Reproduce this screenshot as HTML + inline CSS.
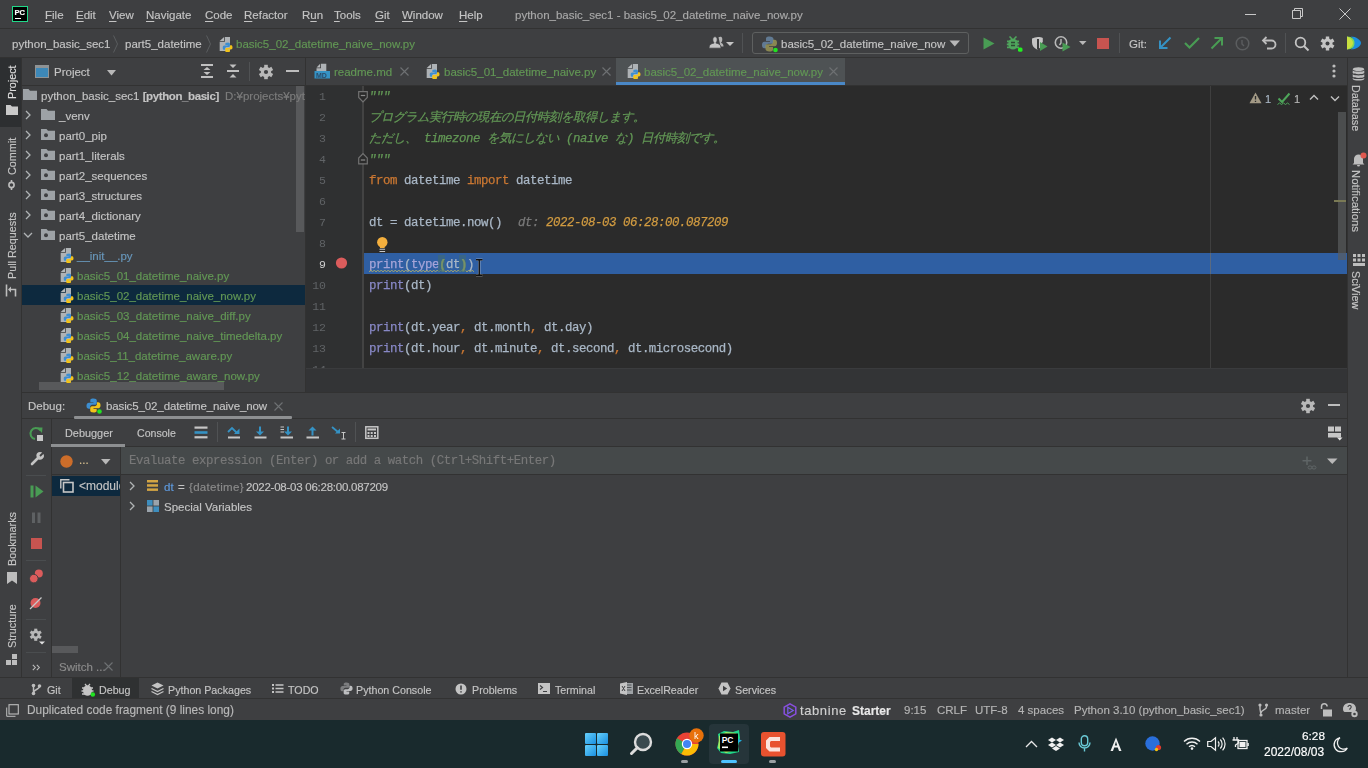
<!DOCTYPE html>
<html><head><meta charset="utf-8">
<style>
*{margin:0;padding:0;box-sizing:border-box}
html,body{width:1368px;height:768px;overflow:hidden;background:#3e3f41;font-family:"Liberation Sans",sans-serif;font-size:11.5px;color:#c4c4c4}
.a{position:absolute}
.t{position:absolute;white-space:nowrap;line-height:14px;-webkit-text-stroke:0.15px currentColor}
.m{font-family:"Liberation Mono",monospace}
.hl{position:absolute;background:#2b2b2b}
.g{color:#629755}
.u{text-decoration:underline;text-underline-offset:2px}
svg{position:absolute;overflow:visible}
#code .t{font-family:"Liberation Mono",monospace;font-size:12.4px;letter-spacing:-0.44px;line-height:21px;height:21px;color:#a9b7c6;-webkit-text-stroke:0.25px currentColor;margin-top:0.5px}
#code .cm{color:#629755}
.kw{color:#cc7832}
.j{display:inline-block;width:12px;font-style:inherit;vertical-align:top}
.bi{color:#8888c6}
.cm{color:#629755;font-style:italic}
.ln{position:absolute;font-family:"Liberation Mono",monospace;font-size:11.5px;color:#606366;line-height:21px;text-align:right;width:30px;left:296px}
</style></head><body>
<svg width="0" height="0" style="position:absolute">
<defs>
<symbol id="fold" viewBox="0 0 14 11"><path d="M0 0H5.5L7 1.8H14V11H0z" fill="#9da2a6"/></symbol>
<symbol id="foldp" viewBox="0 0 14 11"><path d="M0 0H5.5L7 1.8H14V11H0z" fill="#9da2a6"/><circle cx="5" cy="6.3" r="2" fill="#3e3f41"/></symbol>
<symbol id="pyl" viewBox="0 0 16 16"><path d="M7.9 0.5C4.5 0.5 4.6 2 4.6 2.6V4.4H8V5H3.1C1.7 5 0.5 6 0.5 8.3S1.6 11.5 3 11.5H4.3V9.6C4.3 8.3 5.4 7.2 6.6 7.2H9.6C10.7 7.2 11.5 6.3 11.5 5.2V2.6C11.5 1.4 10.5 0.5 7.9 0.5z" fill="#3d8ed0"/><path d="M8.1 15.5C11.5 15.5 11.4 14 11.4 13.4V11.6H8V11H12.9C14.3 11 15.5 10 15.5 7.7S14.4 4.5 13 4.5H11.7V6.4C11.7 7.7 10.6 8.8 9.4 8.8H6.4C5.3 8.8 4.5 9.7 4.5 10.8V13.4C4.5 14.6 5.5 15.5 8.1 15.5z" fill="#f2c318"/></symbol>
<symbol id="pyf" viewBox="0 0 16 16"><path d="M1.7 4.9L6.1 0.9V4.9z" fill="#b4b7b9"/><path d="M6.9 0.9H12V14.9H1.7V5.7H6.9z" fill="#aeb2b5"/><use href="#pyl" x="4.3" y="6.2" width="10.6" height="10.6"/></symbol>
<symbol id="chr" viewBox="0 0 6 10"><path d="M1 1L5 5L1 9" fill="none" stroke="#b0b3b5" stroke-width="1.3"/></symbol>
<symbol id="chd" viewBox="0 0 10 6"><path d="M1 1L5 5L9 1" fill="none" stroke="#b0b3b5" stroke-width="1.3"/></symbol>
<symbol id="gear" viewBox="0 0 16 16"><g transform="translate(8 8)" fill="#b8b8b8"><circle r="5.2"/><rect x="-1.8" y="-7.2" width="3.6" height="14.4"/><rect x="-1.8" y="-7.2" width="3.6" height="14.4" transform="rotate(60)"/><rect x="-1.8" y="-7.2" width="3.6" height="14.4" transform="rotate(120)"/></g><circle cx="8" cy="8" r="2.1" fill="#3e3f41"/></symbol>
</defs></svg>
<!-- ===== TITLE BAR ===== -->
<div class="a" style="left:0;top:0;width:1368px;height:28px;background:#3e3f41"></div>
<div class="a" style="left:0;top:28px;width:1368px;height:1px;background:#323232"></div>
<!-- ===== NAV BAR ===== -->
<div class="a" style="left:0;top:57px;width:1368px;height:1px;background:#323232"></div>
<!-- ===== LEFT STRIPE ===== -->
<div class="a" style="left:0;top:58px;width:22px;height:619px;background:#3e3f41;border-right:1px solid #323232"></div>
<div class="a" style="left:0;top:58px;width:21px;height:69px;background:#2d2f31"></div>
<!-- ===== PROJECT PANEL ===== -->
<div class="a" style="left:22px;top:58px;width:283px;height:27px;background:#3e3f41"></div>
<div class="a" style="left:22px;top:85px;width:283px;height:1px;background:#323232"></div>
<div class="a" style="left:22px;top:86px;width:283px;height:306px;background:#3e3f41"></div>
<div class="a" style="left:22px;top:285px;width:283px;height:20px;background:#0d293e"></div>
<div class="a" style="left:296px;top:86px;width:8px;height:146px;background:#58595b"></div>
<div class="a" style="left:39px;top:382px;width:185px;height:8px;background:#58595b"></div>
<div class="a" style="left:305px;top:58px;width:1px;height:334px;background:#323232"></div>
<!-- ===== EDITOR TABS ===== -->
<div class="a" style="left:306px;top:58px;width:1041px;height:27px;background:#3e3f41"></div>
<div class="a" style="left:616px;top:58px;width:229px;height:27px;background:#4e5254"></div>
<div class="a" style="left:616px;top:82px;width:229px;height:3px;background:#4a88c7"></div>
<div class="a" style="left:306px;top:85px;width:1041px;height:1px;background:#323232"></div>
<!-- ===== EDITOR ===== -->
<div class="a" style="left:306px;top:86px;width:1041px;height:282px;background:#2b2b2b"></div>
<div class="a" style="left:306px;top:86px;width:57px;height:282px;background:#2f3031"></div>
<div class="a" style="left:362px;top:86px;width:2px;height:282px;background:#434343"></div>
<div class="a" style="left:1210px;top:86px;width:1px;height:282px;background:#3f3f3f"></div>
<div class="a" style="left:364px;top:253px;width:983px;height:21px;background:#2f5fa3"></div>
<div class="a" style="left:1210px;top:253px;width:1px;height:21px;background:#5a6a80"></div>
<div class="a" style="left:1338px;top:112px;width:8px;height:148px;background:rgba(90,92,94,0.7)"></div>
<div class="a" style="left:1334px;top:200px;width:12px;height:2px;background:#7a7a55"></div>
<div class="a" style="left:306px;top:368px;width:1041px;height:24px;background:#333436"></div>
<div class="a" style="left:306px;top:368px;width:1041px;height:1px;background:#3a3b3d"></div>
<div class="a" style="left:296px;top:359px;width:30px;height:9px;overflow:hidden"><div class="t m" style="left:0;top:0;width:30px;text-align:right;font-size:11.5px;color:#606366;line-height:21px">14</div></div>
<!-- ===== RIGHT STRIPE ===== -->
<div class="a" style="left:1347px;top:58px;width:21px;height:619px;background:#3e3f41;border-left:1px solid #323232"></div>
<!-- ===== DEBUG PANEL ===== -->
<div class="a" style="left:22px;top:392px;width:1325px;height:1px;background:#323232"></div>
<div class="a" style="left:22px;top:418px;width:1325px;height:1px;background:#323232"></div>
<div class="a" style="left:74px;top:416px;width:218px;height:2.5px;background:#8d8f91;border-radius:1px"></div>
<div class="a" style="left:51px;top:419px;width:1px;height:258px;background:#323232"></div>
<div class="a" style="left:52px;top:446px;width:1295px;height:1px;background:#323232"></div>
<div class="a" style="left:51px;top:444px;width:74px;height:3px;background:#8d8f91"></div>
<div class="a" style="left:120px;top:447px;width:1227px;height:28px;background:#45494a"></div>
<div class="a" style="left:52px;top:474px;width:1295px;height:1px;background:#323232"></div>
<div class="a" style="left:120px;top:447px;width:1px;height:230px;background:#323232"></div>
<div class="a" style="left:52px;top:476px;width:68px;height:20px;background:#0d293e"></div>
<div class="a" style="left:52px;top:646px;width:26px;height:7px;background:#58595b"></div>
<!-- ===== BOTTOM TOOL BAR ===== -->
<div class="a" style="left:0;top:677px;width:1368px;height:1px;background:#323232"></div>
<div class="a" style="left:72px;top:678px;width:67px;height:21px;background:#2f3132"></div>
<div class="a" style="left:0;top:698px;width:1368px;height:1px;background:#323232"></div>
<!-- ===== TASKBAR ===== -->
<div class="a" style="left:0;top:720px;width:1368px;height:48px;background:#192a2d"></div>
<div class="a" style="left:709px;top:724px;width:40px;height:40px;background:#26353a;border-radius:4px"></div>

<!-- TITLE TEXT -->
<div class="a" style="left:12px;top:6px;width:16px;height:16px;background:#000;border:1.5px solid #21d789"></div>
<div class="t" style="left:14.5px;top:8.5px;font-size:7.6px;font-weight:bold;color:#fff;line-height:8px">PC</div>
<div class="a" style="left:15px;top:17.5px;width:5.5px;height:1.5px;background:#fff"></div>
<div class="t" style="left:45px;top:8px"><span class="u">F</span>ile</div>
<div class="t" style="left:76px;top:8px"><span class="u">E</span>dit</div>
<div class="t" style="left:109px;top:8px"><span class="u">V</span>iew</div>
<div class="t" style="left:146px;top:8px"><span class="u">N</span>avigate</div>
<div class="t" style="left:205px;top:8px"><span class="u">C</span>ode</div>
<div class="t" style="left:244px;top:8px"><span class="u">R</span>efactor</div>
<div class="t" style="left:302px;top:8px">R<span class="u">u</span>n</div>
<div class="t" style="left:334px;top:8px"><span class="u">T</span>ools</div>
<div class="t" style="left:375px;top:8px"><span class="u">G</span>it</div>
<div class="t" style="left:402px;top:8px"><span class="u">W</span>indow</div>
<div class="t" style="left:459px;top:8px"><span class="u">H</span>elp</div>
<div class="t" style="left:515px;top:8px;color:#a9a9a9">python_basic_sec1 - basic5_02_datetime_naive_now.py</div>
<!-- NAV TEXT -->
<div class="t" style="left:12px;top:37px">python_basic_sec1</div>
<div class="t" style="left:125px;top:37px">part5_datetime</div>
<div class="t g" style="left:236px;top:37px">basic5_02_datetime_naive_now.py</div>
<div class="a" style="left:752px;top:32px;width:217px;height:22px;border:1px solid #5e6060;border-radius:3px"></div>
<div class="t" style="left:781px;top:37px">basic5_02_datetime_naive_now</div>
<div class="t" style="left:1129px;top:37px">Git:</div>
<!-- PROJECT HEADER -->
<div class="t" style="left:54px;top:65px">Project</div>
<!-- TABS -->
<div class="t g" style="left:334px;top:65px">readme.md</div>
<div class="t g" style="left:444px;top:65px">basic5_01_datetime_naive.py</div>
<div class="t g" style="left:644px;top:65px">basic5_02_datetime_naive_now.py</div>
<!-- TREE -->
<div class="a" style="left:22px;top:86px;width:283px;height:306px;overflow:hidden">
<div class="t" style="left:19px;top:3px">python_basic_sec1 <b style="letter-spacing:-0.4px">[python_basic]</b> <span style="color:#7c7c7c;margin-left:3px">D:¥projects¥python_basic</span></div>
<div class="t" style="left:37px;top:23px">_venv</div>
<div class="t" style="left:37px;top:43px">part0_pip</div>
<div class="t" style="left:37px;top:63px">part1_literals</div>
<div class="t" style="left:37px;top:83px">part2_sequences</div>
<div class="t" style="left:37px;top:103px">part3_structures</div>
<div class="t" style="left:37px;top:123px">part4_dictionary</div>
<div class="t" style="left:37px;top:143px">part5_datetime</div>
<div class="t" style="left:55px;top:163px;color:#6897bb">__init__.py</div>
<div class="t g" style="left:55px;top:183px">basic5_01_datetime_naive.py</div>
<div class="t g" style="left:55px;top:203px">basic5_02_datetime_naive_now.py</div>
<div class="t g" style="left:55px;top:223px">basic5_03_datetime_naive_diff.py</div>
<div class="t g" style="left:55px;top:243px">basic5_04_datetime_naive_timedelta.py</div>
<div class="t g" style="left:55px;top:263px">basic5_11_datetime_aware.py</div>
<div class="t g" style="left:55px;top:283px">basic5_12_datetime_aware_now.py</div>
</div>

<!-- CODE -->
<div id="code">
<div class="ln" style="top:86px">1</div>
<div class="ln" style="top:107px">2</div>
<div class="ln" style="top:128px">3</div>
<div class="ln" style="top:149px">4</div>
<div class="ln" style="top:170px">5</div>
<div class="ln" style="top:191px">6</div>
<div class="ln" style="top:212px">7</div>
<div class="ln" style="top:233px">8</div>
<div class="ln" style="top:254px;color:#d0d0d0">9</div>
<div class="ln" style="top:275px">10</div>
<div class="ln" style="top:296px">11</div>
<div class="ln" style="top:317px">12</div>
<div class="ln" style="top:338px">13</div>
<div class="t cm" style="left:369px;top:86px">"""</div>
<div class="t cm" style="left:369px;top:107px"><i class="j">プ</i><i class="j">ロ</i><i class="j">グ</i><i class="j">ラ</i><i class="j">ム</i><i class="j">実</i><i class="j">行</i><i class="j">時</i><i class="j">の</i><i class="j">現</i><i class="j">在</i><i class="j">の</i><i class="j">日</i><i class="j">付</i><i class="j">時</i><i class="j">刻</i><i class="j">を</i><i class="j">取</i><i class="j">得</i><i class="j">し</i><i class="j">ま</i><i class="j">す</i><i class="j">。</i></div>
<div class="t cm" style="left:369px;top:128px"><i class="j">た</i><i class="j">だ</i><i class="j">し</i><i class="j">、</i> timezone <i class="j">を</i><i class="j">気</i><i class="j">に</i><i class="j">し</i><i class="j">な</i><i class="j">い</i> (naive <i class="j">な</i>) <i class="j">日</i><i class="j">付</i><i class="j">時</i><i class="j">刻</i><i class="j">で</i><i class="j">す</i><i class="j">。</i></div>
<div class="t cm" style="left:369px;top:149px">"""</div>
<div class="t" style="left:369px;top:170px"><span class="kw">from</span> datetime <span class="kw">import</span> datetime</div>
<div class="t" style="left:369px;top:212px">dt = datetime.now()</div>
<div class="t" style="left:518px;top:212px;font-style:italic"><span style="color:#787878">dt:</span> <span style="color:#d19b41">2022-08-03 06:28:00.087209</span></div>
<div class="t" style="left:369px;top:254px;color:#a9b7c6"><span style="color:#a5a4d8">print</span>(<span style="color:#a5a4d8">type</span><span style="color:#fff23a;font-weight:bold">(</span>dt<span style="color:#fff23a;font-weight:bold">)</span>)</div>
<div class="t" style="left:369px;top:275px"><span class="bi">print</span>(dt)</div>
<div class="t" style="left:369px;top:317px"><span class="bi">print</span>(dt.year<span class="kw">,</span> dt.month<span class="kw">,</span> dt.day)</div>
<div class="t" style="left:369px;top:338px"><span class="bi">print</span>(dt.hour<span class="kw">,</span> dt.minute<span class="kw">,</span> dt.second<span class="kw">,</span> dt.microsecond)</div>
</div>
<!-- DEBUG TEXT -->
<div class="t" style="left:28px;top:399px">Debug:</div>
<div class="t" style="left:106px;top:399px;letter-spacing:-0.12px">basic5_02_datetime_naive_now</div>
<div class="t" style="left:65px;top:426px;font-size:10.9px">Debugger</div>
<div class="t" style="left:137px;top:426px;font-size:10.6px">Console</div>
<div class="t m" style="left:129px;top:454px;font-size:12.4px;letter-spacing:-0.44px;color:#787878">Evaluate expression (Enter) or add a watch (Ctrl+Shift+Enter)</div>
<div class="a" style="left:52px;top:476px;width:68px;height:20px;overflow:hidden"><div class="t" style="left:27px;top:3px;font-size:12px">&lt;module&gt;</div></div>
<div class="t" style="left:164px;top:480px;color:#5f9be0">dt</div><div class="t" style="left:178px;top:480px">=</div><div class="t" style="left:189px;top:480px;color:#8c8c8c;font-size:11.5px;letter-spacing:0.3px">{datetime}</div><div class="t" style="left:246px;top:480px;letter-spacing:-0.25px">2022-08-03 06:28:00.087209</div>
<div class="t" style="left:164px;top:500px">Special Variables</div>
<div class="t" style="left:59px;top:660px;color:#8c8c8c">Switch ...</div>
<!-- BOTTOM BAR TEXT -->
<div class="t" style="left:47px;top:683px;font-size:10.7px">Git</div>
<div class="t" style="left:99px;top:683px;font-size:10.7px">Debug</div>
<div class="t" style="left:168px;top:683px;font-size:10.7px">Python Packages</div>
<div class="t" style="left:288px;top:683px;font-size:10.7px">TODO</div>
<div class="t" style="left:356px;top:683px;font-size:10.7px">Python Console</div>
<div class="t" style="left:472px;top:683px;font-size:10.7px">Problems</div>
<div class="t" style="left:555px;top:683px;font-size:10.7px">Terminal</div>
<div class="t" style="left:637px;top:683px;font-size:10.7px">ExcelReader</div>
<div class="t" style="left:735px;top:683px;font-size:10.7px">Services</div>
<!-- STATUS BAR TEXT -->
<div class="t" style="left:27px;top:703px;font-size:11.9px;color:#b8b8b8">Duplicated code fragment (9 lines long)</div>
<div class="t" style="left:800px;top:703.5px;font-size:13px;color:#d0d0d0;letter-spacing:0.6px">tabnine</div><div class="t" style="left:852px;top:703.5px;font-size:12px;font-weight:bold;color:#e8e8e8">Starter</div>
<div class="t" style="left:904px;top:703px;color:#b4b4b4">9:15</div>
<div class="t" style="left:937px;top:703px;color:#b4b4b4">CRLF</div>
<div class="t" style="left:975px;top:703px;color:#b4b4b4">UTF-8</div>
<div class="t" style="left:1018px;top:703px;color:#b4b4b4">4 spaces</div>
<div class="t" style="left:1074px;top:703px;color:#b4b4b4">Python 3.10 (python_basic_sec1)</div>
<div class="t" style="left:1275px;top:703px;color:#b4b4b4">master</div>
<!-- TASKBAR TEXT -->
<div class="t" style="left:1302px;top:729px;color:#fff;font-size:11.8px">6:28</div>
<div class="t" style="left:1264px;top:745px;color:#fff;font-size:12px">2022/08/03</div>

<!-- WINDOW CONTROLS -->
<svg style="left:1245px;top:9px" width="12" height="10"><path d="M0 5.5H11" stroke="#c8c8c8" stroke-width="1"/></svg>
<svg style="left:1292px;top:8px" width="12" height="12"><path d="M0.5 2.5h8v8h-8z M2.5 2.5V0.5h8v8h-2" fill="none" stroke="#c8c8c8" stroke-width="1"/></svg>
<svg style="left:1339px;top:8px" width="12" height="12"><path d="M0.5 0.5L11.5 11.5M11.5 0.5L0.5 11.5" stroke="#c8c8c8" stroke-width="1"/></svg>
<!-- NAV CHEVRONS -->
<svg style="left:113px;top:35px" width="6" height="18"><path d="M0.5 0.5L4.5 9L0.5 17.5" fill="none" stroke="#5a5d5f" stroke-width="1"/></svg>
<svg style="left:206px;top:35px" width="6" height="18"><path d="M0.5 0.5L4.5 9L0.5 17.5" fill="none" stroke="#5a5d5f" stroke-width="1"/></svg>
<!-- TOOLBAR -->
<svg style="left:709px;top:36px" width="26" height="14"><path d="M9.5 1.3C11 0.5 13.3 0.5 13.3 3.2C13.3 5 12.7 6.3 11.8 6.8C13.5 7.3 14.5 8.5 14.5 10.5H11.5z" fill="#b4b4b4"/><path d="M3.8 3.2C3.8 1.2 5.2 0.8 6 0.8S8.2 1.2 8.2 3.2C8.2 5.2 7.5 6.5 6.8 7C10 7.5 12 8.8 12 11.8V12.2H0V11.8C0 8.8 2 7.5 5.2 7C4.5 6.5 3.8 5.2 3.8 3.2z" fill="#c4c4c4" stroke="#3e3f41" stroke-width="0.8"/><path d="M17 6H25L21 10z" fill="#c4c4c4"/></svg>
<div class="a" style="left:742px;top:33px;width:1px;height:20px;background:#505254"></div>
<svg style="left:983px;top:37px" width="12" height="13"><path d="M0.5 0.5L11.5 6.5L0.5 12.5z" fill="#499c54"/></svg>
<svg style="left:1006px;top:35px" width="18" height="18"><g fill="#4fa55c"><path d="M3.5 1.5L6 4M10.5 1.5L8 4" stroke="#4fa55c" stroke-width="1.6"/><ellipse cx="7" cy="9" rx="4.8" ry="5.5"/><path d="M1 5.5h12v1.8H1zM0.8 8.5h12.4v1.8H0.8zM1 11.5h12v1.8H1z"/></g><path d="M5 7.5h4M5 10.5h4" stroke="#2e4a33" stroke-width="1.3"/><rect x="12" y="12.5" width="4.5" height="4.2" rx="1.5" fill="#22f022"/></svg>
<svg style="left:1031px;top:36px" width="18" height="16"><path d="M1 2.5C3 1.5 5 1 7 1C9 1 10.5 1.3 11.8 2V6L9.5 8.5V11.5C8.5 12.3 7.5 12.8 6 13.5C3 12 1 10 1 6.5z" fill="#c4c4c4"/><path d="M7 3V13" stroke="#2b2d2e" stroke-width="1.8"/><path d="M9 6L16.5 10.5L9 15z" fill="#499c54"/></svg>
<svg style="left:1054px;top:35px" width="34" height="17"><circle cx="7" cy="7.5" r="5.7" fill="none" stroke="#b8b8b8" stroke-width="1.6"/><path d="M7 4v4l-1.5 2" stroke="#b8b8b8" stroke-width="1.4" fill="none"/><path d="M8.5 7.5L16.5 12L8.5 16.5z" fill="#499c54"/><path d="M25 6h7.5l-3.75 4z" fill="#b8b8b8"/></svg>
<div class="a" style="left:1097px;top:38px;width:12px;height:11px;background:#c75450"></div>
<div class="a" style="left:1119px;top:33px;width:1px;height:20px;background:#505254"></div>
<svg style="left:1158px;top:36px" width="14" height="14"><path d="M12.5 1.5L3 11M2 4.5V12H9.5" fill="none" stroke="#3592c4" stroke-width="2"/></svg>
<svg style="left:1184px;top:37px" width="16" height="12"><path d="M1 6L5.5 10.5L15 1" fill="none" stroke="#499c54" stroke-width="2.2"/></svg>
<svg style="left:1210px;top:36px" width="14" height="14"><path d="M1.5 12.5L11 3M4.5 2H12V9.5" fill="none" stroke="#499c54" stroke-width="2"/></svg>
<svg style="left:1235px;top:36px" width="16" height="16"><circle cx="7.5" cy="7.5" r="6.3" fill="none" stroke="#5b5d5f" stroke-width="1.5"/><path d="M7 4v4l2 2" stroke="#5b5d5f" stroke-width="1.4" fill="none"/></svg>
<svg style="left:1262px;top:36px" width="16" height="15"><path d="M4.5 1L1 4.5L4.5 8" fill="none" stroke="#bdbdbd" stroke-width="1.8"/><path d="M1.5 4.5H9.5a4 4 0 0 1 0 8H5" fill="none" stroke="#bdbdbd" stroke-width="1.8"/></svg>
<div class="a" style="left:1285px;top:33px;width:1px;height:20px;background:#505254"></div>
<svg style="left:1294px;top:36px" width="16" height="16"><circle cx="6.5" cy="6.5" r="4.8" fill="none" stroke="#c4c4c4" stroke-width="1.8"/><path d="M10 10L14.5 14.5" stroke="#c4c4c4" stroke-width="2"/></svg>
<svg style="left:1320px;top:36px" width="16" height="16"><g transform="translate(7.5 7.5)" fill="#c4c4c4"><circle r="5"/><rect x="-1.7" y="-7" width="3.4" height="14"/><rect x="-1.7" y="-7" width="3.4" height="14" transform="rotate(60)"/><rect x="-1.7" y="-7" width="3.4" height="14" transform="rotate(120)"/></g><circle cx="7.5" cy="7.5" r="2" fill="#3e3f41"/></svg>
<svg style="left:1346px;top:35px" width="16" height="16"><path d="M1 1.5C6 1.5 10 5 10 8s-4 6.5-9 6.5z" fill="#7ed85a"/><path d="M5 1.5C10 1.5 15 5 15 8s-5 6.5-10 6.5C8 12 8.5 10 8.5 8S8 4 5 1.5z" fill="#1b8fe0"/><path d="M1 1.5C5 3 7 5.5 7 8s-2 5-6 6.5z" fill="#c8e040"/></svg>
<!-- run config python icon -->
<svg style="left:762px;top:36px" width="18" height="18"><path d="M7.5 0.5C4 0.5 4 2 4 3v2h4v0.8H2.2C0.8 5.8 0 7 0 9s0.8 3.2 2.2 3.2H4V10c0-1.2 1-2.2 2.2-2.2h3.6C11 7.8 11.5 7 11.5 6V3c0-1.5-1.5-2.5-4-2.5z" fill="#6a8aa8" opacity="0.8"/><path d="M7.5 15.5c3.5 0 3.5-1.5 3.5-2.5v-2H7v-0.8h5.8c1.4 0 2.2-1.2 2.2-3.2s-0.8-3.2-2.2-3.2H11V6c0 1.2-1 2.2-2.2 2.2H5.2C4 8.2 3.5 9 3.5 10v3c0 1.5 1.5 2.5 4 2.5z" fill="#9e9a55" opacity="0.8"/><circle cx="13.5" cy="14" r="2.3" fill="#22e222"/></svg>
<svg style="left:949px;top:40px" width="12" height="8"><path d="M0.5 0.5h10.5l-5.25 6z" fill="#b8b8b8"/></svg>

<!-- PROJECT HEADER ICONS -->
<div class="a" style="left:35px;top:65px;width:14px;height:13px;border:1.5px solid #8f9395;background:#3d88b8"></div>
<div class="a" style="left:35px;top:65px;width:14px;height:3px;background:#8f9395"></div>
<svg style="left:107px;top:70px" width="9" height="6"><path d="M0 0H9L4.5 5.5z" fill="#b8b8b8"/></svg>
<svg style="left:200px;top:63px" width="14" height="16"><path d="M1 1h12v2H1zM1 13h12v2H1z" fill="#c0c0c0"/><path d="M3.5 7L7 4L10.5 7zM3.5 9L7 12L10.5 9z" fill="#c0c0c0"/></svg>
<svg style="left:226px;top:63px" width="14" height="16"><path d="M1 7h12v2H1z" fill="#c0c0c0"/><path d="M3.5 1.5L7 5L10.5 1.5zM3.5 14.5L7 11L10.5 14.5z" fill="#c0c0c0"/></svg>
<div class="a" style="left:249px;top:62px;width:1px;height:19px;background:#505254"></div>
<svg style="left:258px;top:64px" width="16" height="16"><use href="#gear" width="16" height="16"/></svg>
<div class="a" style="left:286px;top:70px;width:13px;height:2px;background:#bdbdbd"></div>
<!-- LEFT STRIPE TEXT -->
<div class="t" style="left:5px;top:99px;transform:rotate(-90deg);transform-origin:left top;font-size:10.8px;color:#dcdcdc">Project</div>
<svg style="left:6px;top:105px" width="12" height="10"><path d="M0 0H4.5L6 1.5H12V10H0z" fill="#c9c9c9"/></svg>
<div class="t" style="left:5px;top:175px;transform:rotate(-90deg);transform-origin:left top;font-size:10.8px">Commit</div>
<svg style="left:5px;top:180px" width="13" height="10"><circle cx="6.5" cy="5" r="2.6" fill="none" stroke="#bdbdbd" stroke-width="1.6"/><path d="M6.5 0V2.3M6.5 7.7V10" stroke="#bdbdbd" stroke-width="1.6"/></svg>
<div class="t" style="left:5px;top:279px;transform:rotate(-90deg);transform-origin:left top;font-size:10.8px">Pull Requests</div>
<svg style="left:5px;top:284px" width="12" height="13"><path d="M1.5 0.5V12.5" stroke="#bdbdbd" stroke-width="1.6"/><path d="M10.5 12.5V5.5H5" fill="none" stroke="#bdbdbd" stroke-width="1.6"/><path d="M6 2.5L3 5.5L6 8.5z" fill="#bdbdbd"/></svg>
<div class="t" style="left:5px;top:566px;transform:rotate(-90deg);transform-origin:left top;font-size:10.8px">Bookmarks</div>
<svg style="left:7px;top:572px" width="10" height="12"><path d="M0 0H10V12L5 8.5L0 12z" fill="#bdbdbd"/></svg>
<div class="t" style="left:5px;top:648px;transform:rotate(-90deg);transform-origin:left top;font-size:10.8px">Structure</div>
<svg style="left:6px;top:654px" width="11" height="11"><path d="M6 0h5v5H6zM0 6h5v5H0zM6 6h5v5H6z" fill="#bdbdbd"/></svg>
<!-- RIGHT STRIPE TEXT -->
<svg style="left:1352px;top:67px" width="13" height="14"><g fill="#bdbdbd"><ellipse cx="6.5" cy="2.2" rx="5.8" ry="2"/><path d="M0.7 3.5c1 1.6 10.6 1.6 11.6 0v2.5c-1 1.6-10.6 1.6-11.6 0z"/><path d="M0.7 7.2c1 1.6 10.6 1.6 11.6 0v2.5c-1 1.6-10.6 1.6-11.6 0z"/><path d="M0.7 10.9c1 1.6 10.6 1.6 11.6 0v1c-1 2.2-10.6 2.2-11.6 0z"/></g></svg>
<div class="t" style="left:1363px;top:85px;transform:rotate(90deg);transform-origin:left top;font-size:10.8px">Database</div>
<svg style="left:1352px;top:152px" width="14" height="15"><path d="M2 11V7a4.5 4.5 0 0 1 9 0v4l1.5 1.5H0.5z" fill="#bdbdbd"/><path d="M5 13h3a1.5 1.5 0 0 1-3 0z" fill="#bdbdbd"/><circle cx="11.5" cy="3.5" r="3" fill="#e0584f"/></svg>
<div class="t" style="left:1363px;top:170px;transform:rotate(90deg);transform-origin:left top;font-size:11.4px">Notifications</div>
<svg style="left:1353px;top:254px" width="12" height="12"><g fill="#bdbdbd"><rect x="0" y="0" width="3" height="3"/><rect x="4.5" y="0" width="3" height="3"/><rect x="9" y="0" width="3" height="3"/><rect x="0" y="4.5" width="3" height="3"/><rect x="4.5" y="4.5" width="3" height="3"/><rect x="9" y="4.5" width="3" height="3"/><rect x="0" y="9" width="12" height="3"/></g></svg>
<div class="t" style="left:1363px;top:271px;transform:rotate(90deg);transform-origin:left top;font-size:10.8px">SciView</div>
<!-- TREE ICONS -->
<svg style="left:23px;top:89px" width="14" height="11"><use href="#fold" width="14" height="11"/></svg>
<svg style="left:25px;top:110px" width="6" height="10"><use href="#chr" width="6" height="10"/></svg>
<svg style="left:41px;top:109px" width="14" height="11"><use href="#fold" width="14" height="11"/></svg>
<svg style="left:25px;top:130px" width="6" height="10"><use href="#chr" width="6" height="10"/></svg>
<svg style="left:41px;top:129px" width="14" height="11"><use href="#foldp" width="14" height="11"/></svg>
<svg style="left:25px;top:150px" width="6" height="10"><use href="#chr" width="6" height="10"/></svg>
<svg style="left:41px;top:149px" width="14" height="11"><use href="#foldp" width="14" height="11"/></svg>
<svg style="left:25px;top:170px" width="6" height="10"><use href="#chr" width="6" height="10"/></svg>
<svg style="left:41px;top:169px" width="14" height="11"><use href="#foldp" width="14" height="11"/></svg>
<svg style="left:25px;top:190px" width="6" height="10"><use href="#chr" width="6" height="10"/></svg>
<svg style="left:41px;top:189px" width="14" height="11"><use href="#foldp" width="14" height="11"/></svg>
<svg style="left:25px;top:210px" width="6" height="10"><use href="#chr" width="6" height="10"/></svg>
<svg style="left:41px;top:209px" width="14" height="11"><use href="#foldp" width="14" height="11"/></svg>
<svg style="left:23px;top:232px" width="10" height="6"><use href="#chd" width="10" height="6"/></svg>
<svg style="left:41px;top:229px" width="14" height="11"><use href="#foldp" width="14" height="11"/></svg>
<div class="a" style="left:59px;top:247px;width:16px;height:140px;overflow:hidden">
<svg style="left:0;top:0" width="16" height="16"><use href="#pyf" width="16" height="16"/></svg>
<svg style="left:0;top:20px" width="16" height="16"><use href="#pyf" width="16" height="16"/></svg>
<svg style="left:0;top:40px" width="16" height="16"><use href="#pyf" width="16" height="16"/></svg>
<svg style="left:0;top:60px" width="16" height="16"><use href="#pyf" width="16" height="16"/></svg>
<svg style="left:0;top:80px" width="16" height="16"><use href="#pyf" width="16" height="16"/></svg>
<svg style="left:0;top:100px" width="16" height="16"><use href="#pyf" width="16" height="16"/></svg>
<svg style="left:0;top:120px" width="16" height="16"><use href="#pyf" width="16" height="16"/></svg>
<svg style="left:0;top:140px" width="16" height="16"><use href="#pyf" width="16" height="16"/></svg>
</div>
<!-- TAB ICONS -->
<svg style="left:314px;top:63px" width="18" height="17"><path d="M2.5 4.5L6.2 0.8V4.5z" fill="#b4b7b9"/><path d="M7 0.8H12.3V8H2.5V5.3H7z" fill="#aeb2b5"/><rect x="0.5" y="8" width="15.5" height="7.5" fill="#3592c4"/><text x="2" y="14.5" font-family="Liberation Sans" font-size="7" font-weight="bold" fill="#2b4c6a">MD</text></svg>
<svg style="left:400px;top:67px" width="9" height="9"><path d="M0.5 0.5L8.5 8.5M8.5 0.5L0.5 8.5" stroke="#6e7173" stroke-width="1.1"/></svg>
<svg style="left:425px;top:63px" width="16" height="16"><use href="#pyf" width="16" height="16"/></svg>
<svg style="left:602px;top:67px" width="9" height="9"><path d="M0.5 0.5L8.5 8.5M8.5 0.5L0.5 8.5" stroke="#6e7173" stroke-width="1.1"/></svg>
<svg style="left:626px;top:63px" width="16" height="16"><use href="#pyf" width="16" height="16"/></svg>
<svg style="left:829px;top:67px" width="9" height="9"><path d="M0.5 0.5L8.5 8.5M8.5 0.5L0.5 8.5" stroke="#6e7173" stroke-width="1.1"/></svg>
<svg style="left:1332px;top:64px" width="4" height="14"><circle cx="2" cy="2" r="1.6" fill="#bdbdbd"/><circle cx="2" cy="7" r="1.6" fill="#bdbdbd"/><circle cx="2" cy="12" r="1.6" fill="#bdbdbd"/></svg>
<!-- NAV ICON -->
<svg style="left:218px;top:36px" width="16" height="16"><use href="#pyf" width="16" height="16"/></svg>

<!-- EDITOR DECOR -->
<svg style="left:358px;top:91px" width="11" height="12"><path d="M0.7 0.7H9.3V6.5L5 10.8L0.7 6.5z" fill="#2b2b2b" stroke="#727272" stroke-width="1.2"/><path d="M2.8 4.5H7.2" stroke="#8a8a8a" stroke-width="1.2"/></svg>
<svg style="left:358px;top:153px" width="11" height="12"><path d="M0.7 10.8H9.3V5L5 0.7L0.7 5z" fill="#2b2b2b" stroke="#727272" stroke-width="1.2"/><path d="M2.8 7H7.2" stroke="#8a8a8a" stroke-width="1.2"/></svg>
<svg style="left:335px;top:257px" width="13" height="13"><circle cx="6.5" cy="6" r="5.6" fill="#db5c5c"/></svg>
<svg style="left:377px;top:237px" width="12" height="16"><circle cx="5.3" cy="5.3" r="5.2" fill="#f4af3d"/><path d="M3 10h4.6v1H3z" fill="#f4af3d"/><path d="M2.5 12.3h5.6M2.5 14.5h5.6" stroke="#c8c8c8" stroke-width="1.1"/></svg>
<svg style="left:369px;top:269px;overflow:hidden" width="105" height="4"><path d="M0 3 l1.75 -2 1.75 2 1.75 -2 1.75 2 1.75 -2 1.75 2 1.75 -2 1.75 2 1.75 -2 1.75 2 1.75 -2 1.75 2 1.75 -2 1.75 2 1.75 -2 1.75 2 1.75 -2 1.75 2 1.75 -2 1.75 2 1.75 -2 1.75 2 1.75 -2 1.75 2 1.75 -2 1.75 2 1.75 -2 1.75 2 1.75 -2 1.75 2 1.75 -2 1.75 2 1.75 -2 1.75 2 1.75 -2 1.75 2 1.75 -2 1.75 2 1.75 -2 1.75 2 1.75 -2 1.75 2 1.75 -2 1.75 2 1.75 -2 1.75 2 1.75 -2 1.75 2 1.75 -2 1.75 2 1.75 -2 1.75 2 1.75 -2 1.75 2 1.75 -2 1.75 2 1.75 -2 1.75 2 1.75 -2 1.75 2" fill="none" stroke="#a8a86a" stroke-width="0.9"/></svg>
<div class="a" style="left:438px;top:255px;width:7px;height:17px;background:#3d6a7a;opacity:0.7"></div>
<div class="a" style="left:459px;top:255px;width:7px;height:17px;background:#3d6a7a;opacity:0.7"></div>
<svg style="left:475px;top:259px" width="9" height="18"><path d="M1 0.8H7.5M1 16.2H7.5M4.25 0.8V16.2" stroke="#d8d8d8" stroke-width="2.6" fill="none" opacity="0.5"/><path d="M1 0.8H7.5M1 16.2H7.5M4.25 0.8V16.2" stroke="#101010" stroke-width="1.4" fill="none"/></svg>
<!-- INSPECTION WIDGET -->
<svg style="left:1249px;top:92px" width="13" height="12"><path d="M6.5 0.5L12.5 11.2H0.5z" fill="#a39a86"/><path d="M6.5 4V7.6M6.5 8.8V10" stroke="#2b2b2b" stroke-width="1.3"/></svg>
<div class="t" style="left:1265px;top:92px;font-size:11px;color:#a9b7c6">1</div>
<svg style="left:1277px;top:92px" width="14" height="14"><path d="M1.5 6.5L5 10L12.5 1.5" fill="none" stroke="#4ea65a" stroke-width="2"/><path d="M0.5 12.5l2 -1.5 2 1.5 2 -1.5 2 1.5 2 -1.5 2 1.5" fill="none" stroke="#4ea65a" stroke-width="1"/></svg>
<div class="t" style="left:1294px;top:92px;font-size:11px;color:#b8b8b8">1</div>
<svg style="left:1309px;top:94px" width="10" height="7"><path d="M1 5.5L5 1.5L9 5.5" fill="none" stroke="#c0c0c0" stroke-width="1.4"/></svg>
<svg style="left:1330px;top:95px" width="10" height="7"><path d="M1 1.5L5 5.5L9 1.5" fill="none" stroke="#c0c0c0" stroke-width="1.4"/></svg>

<!-- DEBUG HEADER ICONS -->
<svg style="left:86px;top:398px" width="17" height="17"><use href="#pyl" x="0" y="0" width="15" height="15"/><circle cx="13.5" cy="13.5" r="2.3" fill="#22e222"/></svg>
<svg style="left:274px;top:402px" width="9" height="9"><path d="M0.5 0.5L8.5 8.5M8.5 0.5L0.5 8.5" stroke="#6e7173" stroke-width="1.1"/></svg>
<svg style="left:1300px;top:398px" width="16" height="16"><use href="#gear" width="16" height="16"/></svg>
<div class="a" style="left:1328px;top:404px;width:12px;height:2px;background:#bdbdbd"></div>
<!-- DEBUG VERTICAL TOOLBAR -->
<svg style="left:29px;top:426px" width="16" height="16"><path d="M11.5 4.5A5.5 5.5 0 1 0 6 13" fill="none" stroke="#499c54" stroke-width="2"/><path d="M8 1.5L13.5 1.5L13 7z" fill="#499c54"/><rect x="8" y="9" width="6" height="6" fill="#c6c6c6"/></svg>
<svg style="left:30px;top:451px" width="14" height="15"><path d="M2 13L8 7" stroke="#c4c4c4" stroke-width="2.6" stroke-linecap="round"/><path d="M7.5 7.5A4 4 0 0 1 12.8 2.5L10.5 4.8L11.3 5.6L13.6 3.3A4 4 0 0 1 8.5 8.5z" fill="#c4c4c4"/><circle cx="10" cy="4.5" r="3.6" fill="#c4c4c4"/><path d="M10 5L13.5 1.5" stroke="#3e3f41" stroke-width="1.8"/></svg>
<div class="a" style="left:26px;top:475px;width:20px;height:1px;background:#4a4d4f"></div>
<svg style="left:30px;top:485px" width="14" height="13"><rect x="0.5" y="0.5" width="3" height="12" fill="#499c54"/><path d="M5.5 0.5L13.5 6.5L5.5 12.5z" fill="#499c54"/></svg>
<svg style="left:32px;top:512px" width="9" height="11"><rect x="0" y="0.5" width="3" height="10.5" fill="#5e6163"/><rect x="5.5" y="0.5" width="3" height="10.5" fill="#5e6163"/></svg>
<div class="a" style="left:31px;top:538px;width:11px;height:11px;background:#c75450"></div>
<div class="a" style="left:26px;top:560px;width:20px;height:1px;background:#4a4d4f"></div>
<svg style="left:29px;top:569px" width="15" height="15"><circle cx="9.8" cy="4.6" r="4" fill="#db5c5c"/><circle cx="4.8" cy="9.6" r="4.3" fill="#db5c5c" stroke="#3e3f41" stroke-width="1"/></svg>
<svg style="left:29px;top:596px" width="14" height="14"><circle cx="6.5" cy="7" r="5" fill="#db5c5c"/><path d="M1 13L12.5 1.5" stroke="#c8c8c8" stroke-width="1.2"/></svg>
<div class="a" style="left:26px;top:619px;width:20px;height:1px;background:#4a4d4f"></div>
<svg style="left:29px;top:628px" width="17" height="17"><use href="#gear" x="0" y="0" width="13.5" height="13.5"/><path d="M10 13.5H16L13 16.5z" fill="#e0e0e0"/></svg>
<div class="a" style="left:26px;top:652px;width:20px;height:1px;background:#4a4d4f"></div>
<svg style="left:32px;top:664px" width="9" height="7"><path d="M0.8 0.8L3.3 3.5L0.8 6.2M4.8 0.8L7.3 3.5L4.8 6.2" fill="none" stroke="#bdbdbd" stroke-width="1.1"/></svg>
<!-- DEBUG TOOLBAR ROW -->
<svg style="left:194px;top:426px" width="14" height="13"><rect x="0.5" y="0.5" width="13" height="2.2" fill="#c6c6c6"/><rect x="0.5" y="5.2" width="13" height="2.6" fill="#3592c4"/><rect x="0.5" y="10.2" width="13" height="2.2" fill="#c6c6c6"/></svg>
<div class="a" style="left:217px;top:422px;width:1px;height:20px;background:#505254"></div>
<svg style="left:227px;top:426px" width="14" height="13"><path d="M1 6L5 2L10 7" fill="none" stroke="#3592c4" stroke-width="1.8"/><path d="M7 8H12.5V2.5z" fill="#3592c4"/><rect x="1" y="10.5" width="12" height="2" fill="#c6c6c6"/></svg>
<svg style="left:254px;top:426px" width="14" height="13"><path d="M6 0.5V6" stroke="#3592c4" stroke-width="2"/><path d="M2 5.5H10L6 9.5z" fill="#3592c4"/><rect x="0.5" y="10.5" width="12" height="2" fill="#c6c6c6"/></svg>
<svg style="left:280px;top:426px" width="14" height="13"><path d="M0.5 1H4M0.5 3.5H4M0.5 6H4" stroke="#c6c6c6" stroke-width="1"/><path d="M8 0.5V6" stroke="#3592c4" stroke-width="2"/><path d="M4 5.5H12L8 9.5z" fill="#3592c4"/><rect x="0.5" y="10.5" width="12.5" height="2" fill="#c6c6c6"/></svg>
<svg style="left:306px;top:426px" width="14" height="13"><path d="M6.5 4V9.5" stroke="#3592c4" stroke-width="2"/><path d="M2.5 4.5H10.5L6.5 0.5z" fill="#3592c4"/><rect x="0.5" y="10.5" width="12.5" height="2" fill="#c6c6c6"/></svg>
<svg style="left:331px;top:426px" width="16" height="14"><path d="M1 1L7 6" stroke="#3592c4" stroke-width="1.8"/><path d="M4 7.5H9V2.5z" fill="#3592c4"/><path d="M10.5 6.5H14.5M12.5 6.5V13M10.5 13H14.5" stroke="#c6c6c6" stroke-width="1"/></svg>
<div class="a" style="left:355px;top:422px;width:1px;height:20px;background:#505254"></div>
<svg style="left:365px;top:426px" width="14" height="13"><rect x="0.8" y="0.8" width="12" height="11.5" fill="none" stroke="#c6c6c6" stroke-width="1.5"/><rect x="2.5" y="2.5" width="8.5" height="2" fill="#c6c6c6"/><g fill="#c6c6c6"><rect x="2.5" y="6" width="2" height="2"/><rect x="5.7" y="6" width="2" height="2"/><rect x="9" y="6" width="2" height="2"/><rect x="2.5" y="9" width="2" height="2"/><rect x="5.7" y="9" width="2" height="2"/><rect x="9" y="9" width="2" height="2"/></g></svg>
<svg style="left:1327px;top:426px" width="16" height="14"><rect x="1" y="0.5" width="6" height="5" fill="#c6c6c6"/><rect x="8" y="0.5" width="6" height="5" fill="#c6c6c6"/><rect x="1" y="7" width="13" height="4.5" fill="#c6c6c6"/><path d="M10 11.5H15.5L12.75 14.5z" fill="#e8e8e8"/></svg>
<!-- FRAMES -->
<svg style="left:60px;top:455px" width="13" height="13"><circle cx="6.5" cy="6.5" r="6.2" fill="#cc6d2a"/></svg>
<div class="t" style="left:79px;top:453px;color:#d8c090">...</div>
<svg style="left:101px;top:459px" width="10" height="6"><path d="M0 0H9.5L4.75 5.5z" fill="#b8b8b8"/></svg>
<svg style="left:60px;top:479px" width="14" height="14"><path d="M0.8 9.5V0.8H9.5" fill="none" stroke="#c6c6c6" stroke-width="1.4"/><rect x="3.5" y="3.5" width="9.5" height="9.5" fill="none" stroke="#c6c6c6" stroke-width="1.6"/></svg>
<svg style="left:104px;top:662px" width="9" height="9"><path d="M0.5 0.5L8.5 8.5M8.5 0.5L0.5 8.5" stroke="#6e7173" stroke-width="1.1"/></svg>

<!-- VARIABLES -->
<svg style="left:129px;top:481px" width="6" height="10"><use href="#chr" width="6" height="10"/></svg>
<svg style="left:147px;top:480px" width="12" height="12"><rect x="0" y="0" width="11" height="2.5" fill="#d3a544"/><rect x="0" y="4.2" width="11" height="2.5" fill="#d3a544"/><rect x="0" y="8.4" width="11" height="2.5" fill="#d3a544"/></svg>
<svg style="left:129px;top:501px" width="6" height="10"><use href="#chr" width="6" height="10"/></svg>
<svg style="left:147px;top:500px" width="13" height="13"><rect x="0" y="0" width="5.6" height="5.6" fill="#3d8ebf"/><rect x="6.4" y="0" width="5.6" height="5.6" fill="#9aa3ab"/><rect x="0" y="6.4" width="5.6" height="5.6" fill="#9aa3ab"/><rect x="6.4" y="6.4" width="5.6" height="5.6" fill="#3d8ebf"/></svg>
<!-- EVAL ROW ICONS -->
<svg style="left:1301px;top:456px" width="16" height="14"><path d="M6 0.5V9M1.5 4.75H10.5" stroke="#5f6566" stroke-width="1.5"/><path d="M7 11.5a2 1.6 0 1 0 4 0a2 1.6 0 1 0 4 0a2 1.6 0 1 0-4 0a2 1.6 0 1 0-4 0z" fill="none" stroke="#5f6566" stroke-width="1"/></svg>
<svg style="left:1327px;top:458px" width="11" height="7"><path d="M0 0.5H10.5L5.25 6z" fill="#b8b8b8"/></svg>

<!-- BOTTOM BAR ICONS -->
<svg style="left:31px;top:683px" width="11" height="13"><circle cx="2.5" cy="2.5" r="1.8" fill="#bdbdbd"/><circle cx="2.5" cy="10.5" r="1.8" fill="#bdbdbd"/><circle cx="8.5" cy="3" r="1.8" fill="#bdbdbd"/><path d="M2.5 2.5V10.5M8.5 3C8.5 7 2.5 6 2.5 10" fill="none" stroke="#bdbdbd" stroke-width="1.5"/></svg>
<svg style="left:81px;top:683px" width="15" height="14"><ellipse cx="6.5" cy="7.5" rx="4.5" ry="5.2" fill="#c4c4c4"/><path d="M1 5h11M0.5 8h12M1 11h11M4 1l1.8 2.2M9 1l-1.8 2.2" stroke="#c4c4c4" stroke-width="1.3"/><circle cx="11.8" cy="11.5" r="2.3" fill="#22e222"/></svg>
<svg style="left:151px;top:682px" width="13" height="14"><path d="M6.5 0.5L12.5 3.5L6.5 6.5L0.5 3.5z" fill="#c4c4c4"/><path d="M0.5 6.5L6.5 9.5L12.5 6.5M0.5 9.5L6.5 12.5L12.5 9.5" fill="none" stroke="#c4c4c4" stroke-width="1.3"/></svg>
<svg style="left:272px;top:683px" width="12" height="11"><path d="M0 1h2v2H0zM0 4.5h2v2H0zM0 8h2v2H0z" fill="#c4c4c4"/><path d="M3.5 2h8M3.5 5.5h8M3.5 9h8" stroke="#c4c4c4" stroke-width="1.5"/></svg>
<svg style="left:340px;top:682px" width="13" height="13"><use href="#pyl" width="13" height="13"/><rect width="13" height="13" fill="#3e3f41" style="mix-blend-mode:color"/></svg>
<svg style="left:455px;top:683px" width="12" height="12"><circle cx="6" cy="6" r="5.5" fill="#c4c4c4"/><path d="M6 2.5V6.8M6 8.3V9.6" stroke="#3e3f41" stroke-width="1.6"/></svg>
<svg style="left:538px;top:683px" width="12" height="11"><rect width="12" height="11" fill="#c4c4c4"/><path d="M2 2.5L4.5 4.5L2 6.5M5 8.5H9" fill="none" stroke="#3e3f41" stroke-width="1.2"/></svg>
<svg style="left:620px;top:682px" width="13" height="13"><rect x="5" y="1" width="8" height="11" fill="#9fa3a6"/><path d="M6.5 3h5M6.5 5.5h5M6.5 8h5" stroke="#3e3f41" stroke-width="0.8"/><path d="M0 1.5L7 0V13L0 11.5z" fill="#c4c4c4"/><path d="M2 4L5 9M5 4L2 9" stroke="#3e3f41" stroke-width="1"/></svg>
<svg style="left:718px;top:682px" width="13" height="13"><path d="M3.5 0.5H9.5L12.5 6.5L9.5 12.5H3.5L0.5 6.5z" fill="#c4c4c4"/><path d="M5 3.8L9.2 6.5L5 9.2z" fill="#3e3f41"/></svg>
<!-- STATUS BAR ICONS -->
<svg style="left:6px;top:704px" width="13" height="13"><path d="M0.7 3.5V12.3H9.5" fill="none" stroke="#bdbdbd" stroke-width="1"/><rect x="3" y="0.7" width="9.3" height="9.3" fill="none" stroke="#bdbdbd" stroke-width="1.1"/></svg>
<svg style="left:783px;top:703px" width="14" height="15"><path d="M7 0.8L12.8 4.1V10.9L7 14.2L1.2 10.9V4.1z" fill="none" stroke="#8a4fe0" stroke-width="1.5"/><path d="M4.8 4.3L10.2 7.5L4.8 10.7z" fill="none" stroke="#7a5cf0" stroke-width="1.2"/></svg>
<svg style="left:1258px;top:703px" width="11" height="14"><circle cx="2" cy="2" r="1.6" fill="#bdbdbd"/><circle cx="8.5" cy="2" r="1.6" fill="#bdbdbd"/><circle cx="3" cy="12" r="1.6" fill="#bdbdbd"/><path d="M2 2V6L3 12M8.5 2V4C8.5 7 3.5 6 3 10" fill="none" stroke="#bdbdbd" stroke-width="1.4"/></svg>
<svg style="left:1319px;top:703px" width="14" height="14"><path d="M2.5 6V3.5a2.8 2.8 0 0 1 5.6 0" fill="none" stroke="#bdbdbd" stroke-width="1.5"/><rect x="4" y="6.5" width="9" height="7" fill="#bdbdbd"/></svg>
<svg style="left:1342px;top:702px" width="17" height="16"><path d="M1 7C1 3 4 1 7.5 1S14 3 14 7c0 1.5-1 2.5-2 3H2.5C1.5 9.5 1 8.5 1 7z" fill="#bdbdbd"/><path d="M6 5a1.6 1.6 0 1 1 2.5 1.3c-0.6 0.4-0.8 0.8-0.8 1.5" fill="none" stroke="#3e3f41" stroke-width="1.1"/><g transform="translate(12.5 12)"><circle r="3.2" fill="#bdbdbd"/><circle r="1.3" fill="#3e3f41"/></g></svg>
<!-- TASKBAR ICONS -->
<svg style="left:585px;top:733px" width="23" height="23"><defs><linearGradient id="wg" x1="0" y1="0" x2="1" y2="1"><stop offset="0" stop-color="#66d0fb"/><stop offset="1" stop-color="#1a8fe0"/></linearGradient></defs><g fill="url(#wg)"><rect x="0" y="0" width="11" height="11" rx="1"/><rect x="12" y="0" width="11" height="11" rx="1"/><rect x="0" y="12" width="11" height="11" rx="1"/><rect x="12" y="12" width="11" height="11" rx="1"/></g></svg>
<svg style="left:629px;top:732px" width="25" height="25"><circle cx="14" cy="10" r="8" fill="#3a4a4f" stroke="#dcdcdc" stroke-width="2.4"/><path d="M8.3 15.7L2.5 21.5" stroke="#dcdcdc" stroke-width="3" stroke-linecap="round"/></svg>
<svg style="left:673px;top:727px" width="32" height="32"><circle cx="14" cy="17" r="11.5" fill="#e94235"/><path d="M14 17L4 11.2A11.5 11.5 0 0 0 8.3 27z" fill="#34a853"/><path d="M14 17L8.3 27A11.5 11.5 0 0 0 25.5 17z" fill="#fbbc04"/><circle cx="14" cy="17" r="5.2" fill="#fff"/><circle cx="14" cy="17" r="4" fill="#4285f4"/><circle cx="23.5" cy="8.5" r="7.2" fill="#e8710a"/><text x="21" y="12" font-family="Liberation Sans" font-size="9" fill="#fff">k</text></svg>
<svg style="left:716px;top:730px" width="28" height="26"><path d="M2 4L8 1L17 2L23 0L24 8L22 16L23 22L14 24L5 23L1 18L3 11z" fill="#21d789"/><path d="M3 6L10 2L20 3L22 10L19 20L10 23L2 18z" fill="#fcf84a" opacity="0.6"/><rect x="4" y="3.5" width="18" height="18" fill="#000"/><text x="5.7" y="12.5" font-family="Liberation Sans" font-weight="bold" font-size="8.5" fill="#fff">PC</text><rect x="6" y="16.5" width="6" height="1.6" fill="#fff"/><path d="M22 9L26 10.5L22 13z" fill="#21b0e0"/></svg>
<div class="a" style="left:681px;top:760px;width:7px;height:3px;border-radius:2px;background:#9aa0a3"></div>
<div class="a" style="left:721px;top:760px;width:16px;height:3px;border-radius:2px;background:#4cc2ff"></div>
<div class="a" style="left:769px;top:760px;width:7px;height:3px;border-radius:2px;background:#9aa0a3"></div>
<svg style="left:761px;top:732px" width="25" height="25"><rect x="0" y="0" width="24.5" height="24.5" rx="3" fill="#e8522f"/><path d="M19 5H8.5L5 8.5V16L8.5 19.5H19V15.5H10L9 14.5V10L10 9H19z" fill="#fbe3dc"/></svg>
<!-- TRAY -->
<svg style="left:1025px;top:740px" width="13" height="8"><path d="M1 7L6.5 1.5L12 7" fill="none" stroke="#e8e8e8" stroke-width="1.3"/></svg>
<svg style="left:1048px;top:737px" width="16" height="14"><g fill="#f0f0f0"><path d="M4 0.5L8 3L4 5.5L0 3z"/><path d="M12 0.5L16 3L12 5.5L8 3z"/><path d="M4 5.5L8 8L4 10.5L0 8z"/><path d="M12 5.5L16 8L12 10.5L8 8z"/><path d="M8 9L12 11.5L8 14L4 11.5z"/></g></svg>
<svg style="left:1078px;top:735px" width="13" height="17"><rect x="3.3" y="0.8" width="6.4" height="10" rx="3.2" fill="none" stroke="#6ac9d6" stroke-width="1.4"/><path d="M1 7.5a5.5 5.5 0 0 0 11 0M6.5 13V16.5" fill="none" stroke="#6ac9d6" stroke-width="1.4"/></svg>
<svg style="left:1110px;top:737px" width="12" height="15"><path d="M6 0.5L11.5 14H9L7.8 10.5H4.2L3 14H0.5z M4.8 8.5H7.2L6 4.5z" fill="#f0f0f0"/></svg>
<svg style="left:1145px;top:736px" width="18" height="16"><circle cx="7.5" cy="7.5" r="7.2" fill="#2a6fdb"/><circle cx="13.5" cy="11.5" r="2.6" fill="#e03a2e"/><circle cx="11.5" cy="13.5" r="1.7" fill="#f4c20d"/></svg>
<svg style="left:1183px;top:737px" width="18" height="13"><path d="M1 4.5a11.5 11.5 0 0 1 16 0M3.5 7.2a8 8 0 0 1 11 0M6 9.8a4.5 4.5 0 0 1 6 0" fill="none" stroke="#f0f0f0" stroke-width="1.4"/><circle cx="9" cy="11.6" r="1.3" fill="#f0f0f0"/></svg>
<svg style="left:1207px;top:737px" width="18" height="14"><path d="M0.7 4.5H4L8.5 0.8V13.2L4 9.5H0.7z" fill="none" stroke="#f0f0f0" stroke-width="1.2"/><path d="M11 4.5a3.5 3.5 0 0 1 0 5M13.3 2.5a6.5 6.5 0 0 1 0 9M15.6 0.7a9.3 9.3 0 0 1 0 12.6" fill="none" stroke="#f0f0f0" stroke-width="1.2"/></svg>
<svg style="left:1232px;top:737px" width="17" height="13"><path d="M2 0V3M5 0V3M0.5 3H6.5V6L3.5 8V10" fill="none" stroke="#f0f0f0" stroke-width="1.3"/><rect x="6" y="3.5" width="9" height="8" fill="none" stroke="#f0f0f0" stroke-width="1.3"/><rect x="7.5" y="5" width="6" height="5" fill="#f0f0f0"/><rect x="15.3" y="6" width="1.5" height="3" fill="#f0f0f0"/></svg>
<svg style="left:1334px;top:737px" width="14" height="15"><path d="M6 0.8A7 7 0 1 0 13.3 11A6 6 0 0 1 6 0.8z" fill="none" stroke="#f0f0f0" stroke-width="1.3"/></svg>
</body></html>
